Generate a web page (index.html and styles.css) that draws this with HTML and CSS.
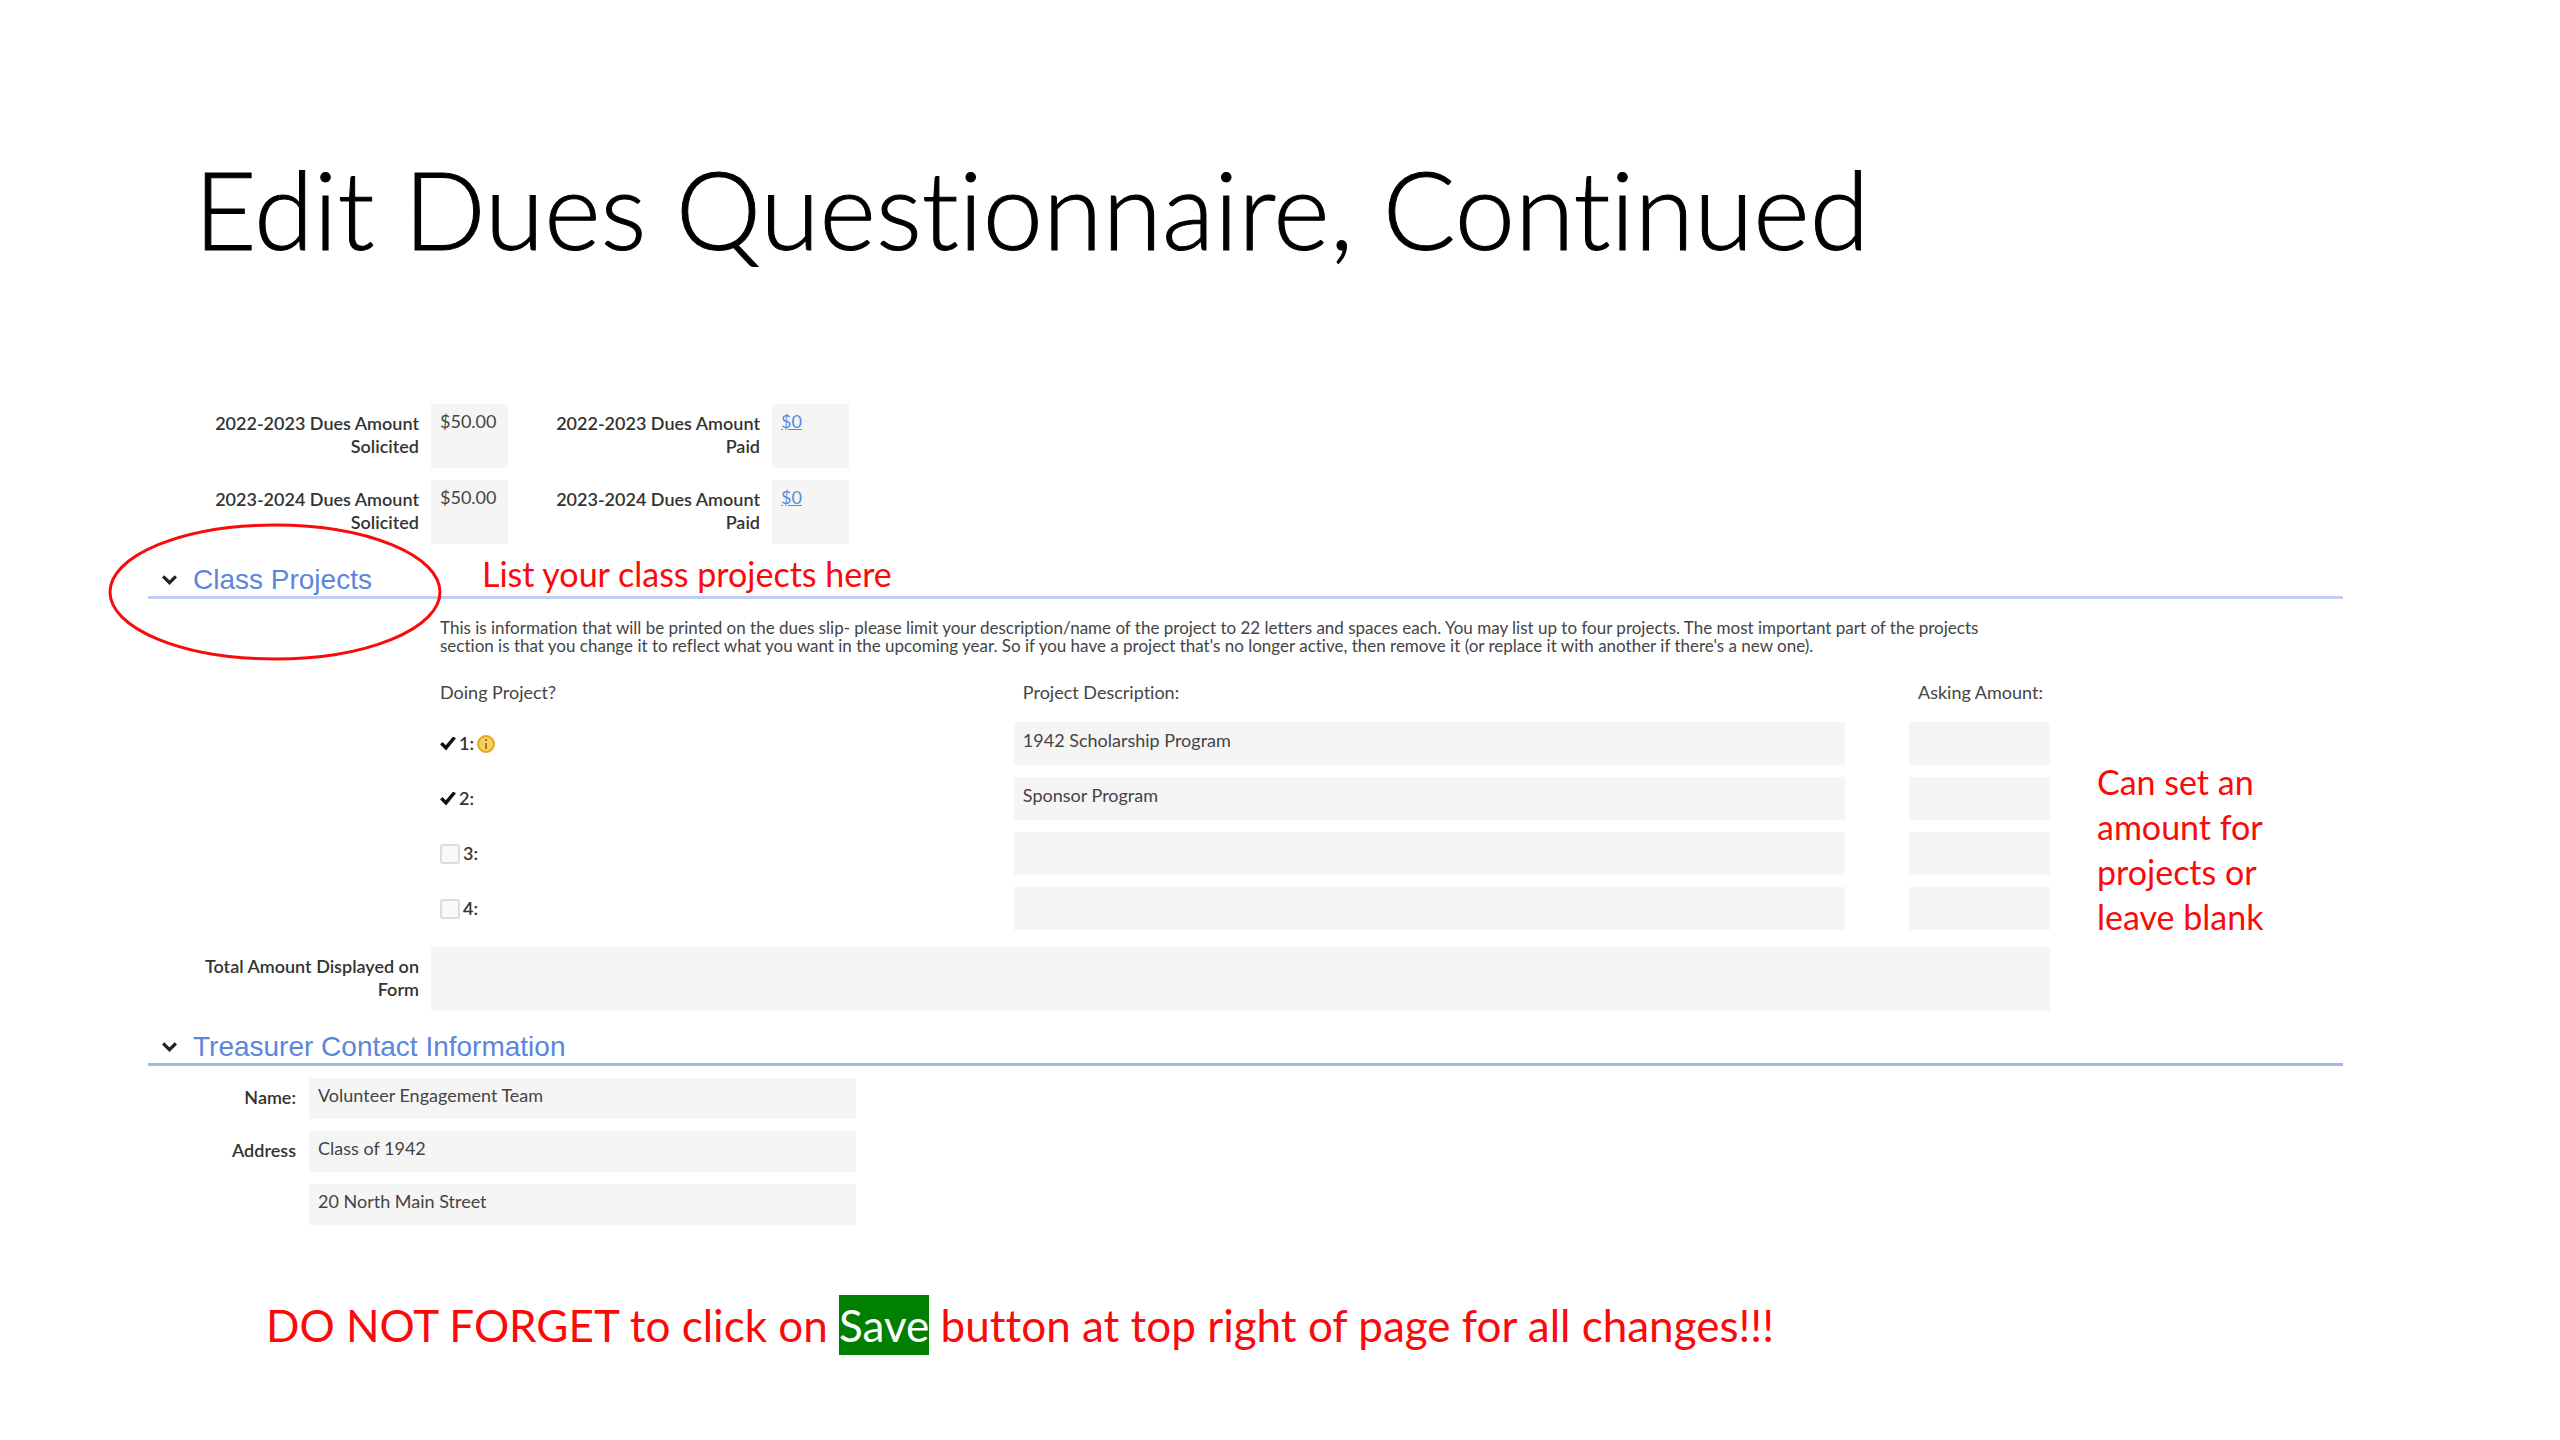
FILE: index.html
```
<!DOCTYPE html>
<html lang="en">
<head>
    <meta charset="UTF-8">
    <meta name="viewport" content="width=device-width, initial-scale=1.0">
    <title>Edit Dues Questionnaire, Continued</title>
    <link rel="stylesheet" href="styles.css">
</head>
<body>
    <h1>Edit Dues Questionnaire, Continued</h1>

    <main class="form">
        <!-- Dues amounts -->
        <div class="dues">
            <div class="dues-label">2022-2023 Dues Amount Solicited</div>
            <div class="dues-value">$50.00</div>
            <div class="dues-label">2022-2023 Dues Amount Paid</div>
            <div class="dues-value"><a href="#">$0</a></div>
            <div class="dues-label">2023-2024 Dues Amount Solicited</div>
            <div class="dues-value">$50.00</div>
            <div class="dues-label">2023-2024 Dues Amount Paid</div>
            <div class="dues-value"><a href="#">$0</a></div>
        </div>

        <!-- Class projects -->
        <div class="section-header light">
            <svg class="chevron" viewBox="0 0 16 10"><path d="M2 2l6 6 6-6" fill="none" stroke="#222" stroke-width="3"/></svg>
            <h2>Class Projects</h2>
            <p class="note">List your class projects here</p>
            <svg class="circle" viewBox="0 0 334 138"><ellipse cx="167" cy="69" rx="165" ry="67" fill="none" stroke="#fa0a0a" stroke-width="3"/></svg>
        </div>
        <div class="projects">
            <div class="projects-main">
                <p class="info">This is information that will be printed on the dues slip- please limit your description/name of the project to 22 letters and spaces each. You may list up to four projects. The most important part of the projects<br>section is that you change it to reflect what you want in the upcoming year. So if you have a project that's no longer active, then remove it (or replace it with another if there's a new one).</p>
                <table>
                    <thead>
                        <tr>
                            <th class="col-doing">Doing Project?</th>
                            <th class="col-desc">Project Description:</th>
                            <th class="col-ask">Asking Amount:</th>
                        </tr>
                    </thead>
                    <tbody>
                        <tr>
                            <td class="doing"><div class="check"><input type="checkbox" id="p1" checked><label for="p1">1:</label>
                                <svg class="info-icon" viewBox="0 0 18 18"><circle cx="9" cy="9" r="8" fill="#f7cf5c" stroke="#e3a71c" stroke-width="2"/><path d="M9 4v2M9 8v6" stroke="#a87a10" stroke-width="2"/></svg></div></td>
                            <td class="desc"><input type="text" value="1942 Scholarship Program" aria-label="Project 1 description"></td>
                            <td><input type="text" aria-label="Project 1 amount"></td>
                        </tr>
                        <tr>
                            <td class="doing"><div class="check"><input type="checkbox" id="p2" checked><label for="p2">2:</label></div></td>
                            <td class="desc"><input type="text" value="Sponsor Program" aria-label="Project 2 description"></td>
                            <td><input type="text" aria-label="Project 2 amount"></td>
                        </tr>
                        <tr>
                            <td class="doing"><div class="check"><input type="checkbox" id="p3"><label for="p3">3:</label></div></td>
                            <td class="desc"><input type="text" aria-label="Project 3 description"></td>
                            <td><input type="text" aria-label="Project 3 amount"></td>
                        </tr>
                        <tr>
                            <td class="doing"><div class="check"><input type="checkbox" id="p4"><label for="p4">4:</label></div></td>
                            <td class="desc"><input type="text" aria-label="Project 4 description"></td>
                            <td><input type="text" aria-label="Project 4 amount"></td>
                        </tr>
                    </tbody>
                </table>
            </div>
            <p class="note side-note">Can set an<br>amount for<br>projects or<br>leave blank</p>
            <label class="total-label" for="total">Total Amount Displayed on Form</label>
            <input class="total" type="text" id="total">
        </div>

        <!-- Treasurer -->
        <div class="section-header">
            <svg class="chevron" viewBox="0 0 16 10"><path d="M2 2l6 6 6-6" fill="none" stroke="#222" stroke-width="3"/></svg>
            <h2>Treasurer Contact Information</h2>
        </div>
        <div class="contact">
            <label for="name">Name:</label>
            <input type="text" id="name" value="Volunteer Engagement Team">
            <label for="address">Address</label>
            <input type="text" id="address" value="Class of 1942">
            <input class="address2" type="text" value="20 North Main Street" aria-label="Address line 2">
        </div>
    </main>

    <p class="reminder">DO NOT FORGET to click on <mark>Save</mark> button at top right of page for all changes!!!</p>
</body>
</html>
```
FILE: styles.css
```
* {
    box-sizing: border-box;
}

body {
    margin: 0;
    padding: 146px 217px 0 148px;
    background: #fff;
    color: #444;
    font-family: Lato, sans-serif;
    font-size: 18px;
    font-variant-ligatures: none;
    line-height: 23px;
}

h1 {
    margin: 0 0 134px;
    padding-left: 46px;
    color: #000;
    font-size: 108px;
    font-weight: 300;
    line-height: 124px;
    -webkit-text-stroke: 1px #000;
}

h2, p {
    margin: 0;
}

input {
    font: inherit;
    color: inherit;
    margin: 0;
    border: 0;
}

input[type="text"] {
    display: block;
    width: 100%;
    height: 43px;
    padding: 0 9px 8px;
    background: #f5f5f5;
}

label, .dues-label {
    color: #333;
    font-weight: 600;
}

/* Dues amounts */
.dues {
    display: grid;
    grid-template-columns: 271px 77px 240px 77px;
    column-gap: 12px;
    row-gap: 12px;
}

.dues-label {
    padding: 8px 0 0 30px;
    text-align: right;
}

.dues-label:nth-child(4n+1) {
    padding-left: 50px;
}

.dues-value {
    height: 64px;
    padding: 6px 9px;
    background: #f5f5f5;
}

.dues-value a {
    color: #5b8be0;
}

/* Section headers */
.section-header {
    position: relative;
    display: flex;
    align-items: flex-end;
    height: 55px;
    padding-left: 13px;
    border-bottom: 3px solid #9dbbe8;
}

.section-header.light {
    border-color: #bfcfed;
}

.chevron {
    width: 17px;
    height: 11px;
    margin: 0 15px 11px 0;
}

h2 {
    color: #5b86dc;
    font-family: "Liberation Sans", sans-serif;
    font-size: 28px;
    font-weight: 400;
    line-height: 32px;
}

.note {
    color: #fa0a0a;
    font-size: 34px;
    line-height: 45px;
}

.section-header .note {
    margin-left: 110px;
}

.circle {
    position: absolute;
    left: -40px;
    top: -21px;
    width: 334px;
    height: 138px;
}

/* Class projects */
.projects {
    display: grid;
    grid-template-columns: 283px 1fr 293px;
}

.projects-main {
    grid-column: 2;
}

.info {
    padding: 20px 0 0 9px;
    font-size: 17px;
    line-height: 18px;
    white-space: nowrap;
}

table {
    width: 100%;
    margin-top: 26px;
    border-collapse: collapse;
    table-layout: fixed;
}

th {
    padding: 0 9px 12px;
    font-weight: 400;
    text-align: left;
    white-space: nowrap;
}

td {
    padding: 6px 0;
}

.col-doing {
    width: 36%;
}

.col-ask {
    width: 141px;
}

.desc {
    padding-right: 64px;
}

.check {
    display: flex;
    align-items: center;
    gap: 3px;
    padding-left: 9px;
}

input[type="checkbox"] {
    appearance: none;
    width: 20px;
    height: 20px;
    border: 2px solid #ddd;
    border-radius: 3px;
    background: #f9f9f9;
}

input[type="checkbox"]:checked {
    width: 16px;
    height: 14px;
    border: 0;
    border-radius: 0;
    background: #111;
    clip-path: polygon(0 55%, 16% 40%, 36% 62%, 82% 0, 100% 12%, 38% 100%);
}

.info-icon {
    width: 18px;
    height: 18px;
}

.side-note {
    padding: 160px 0 0 47px;
}

.total-label {
    padding: 8px 12px 0 50px;
    text-align: right;
}

.projects .total {
    height: 64px;
}

.total-label, .total {
    margin-top: 8px;
}

/* Treasurer */
.contact {
    display: grid;
    grid-template-columns: 148px 547px;
    column-gap: 13px;
    row-gap: 12px;
    padding-top: 12px;
}

.contact label {
    padding-top: 8px;
    text-align: right;
}

.contact input[type="text"] {
    height: 41px;
}

.contact .address2 {
    grid-column: 2;
}

/* Reminder */
.reminder {
    margin-top: 70px;
    padding-left: 118px;
    color: #fa0a0a;
    font-size: 44px;
    line-height: 60px;
}

mark {
    display: inline-block;
    background: #008000;
    color: #fff;
}
```
